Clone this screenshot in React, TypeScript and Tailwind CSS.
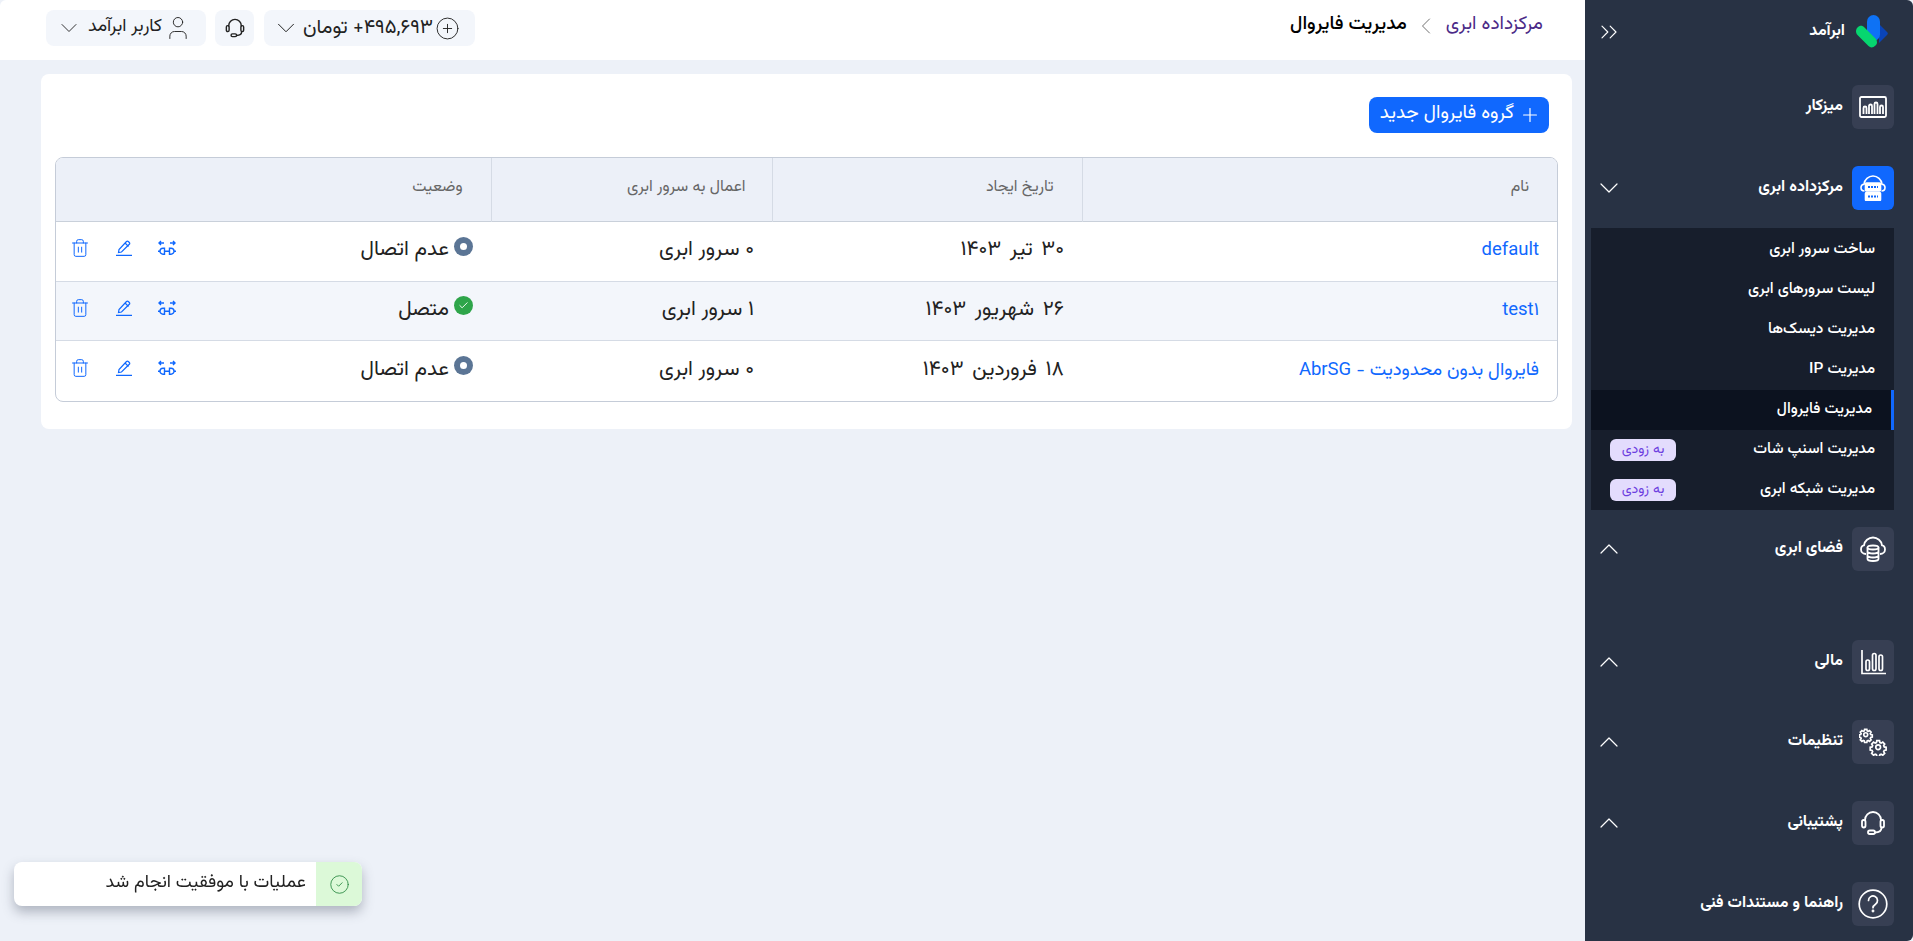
import { ChevronDown, ChevronUp, ChevronLeft, ChevronsRight, Plus, User, CirclePlus, CircleCheck, Check, Trash2 } from "lucide-react";
import type { ReactNode } from "react";

const font = "font-['Vazirmatn','Noto_Sans_Arabic','Noto_Sans','DejaVu_Sans',sans-serif]";

const Headset = ({ className }: { className?: string }) => (
  <svg viewBox="0 0 28 28" fill="none" stroke="currentColor" strokeWidth="1.8" className={className}>
    <path d="M6 12V11a8 8 0 0 1 16 0v1" />
    <rect x="3" y="11" width="3.5" height="7.500" rx="1.7" />
    <rect x="21.5" y="11" width="3.5" height="7.500" rx="1.7" />
    <path d="M22.500 18.500c0 3-2.500 5-6.500 5" />
    <rect x="9" y="21.5" width="7" height="3.500" rx="1.700" />
  </svg>
);

const Dashboard = () => (
  <svg viewBox="0 0 28 22" fill="none" stroke="currentColor" strokeWidth="1.8" className="w-7 h-[22px]">
    <rect x="1" y="1" width="26" height="20" rx="1.5" />
    <path d="M4.500 18v-6a1.500 1.500 0 0 1 3 0v6M10 18v-8a1.500 1.500 0 0 1 3 0v8M15.500 18V8a1.500 1.500 0 0 1 3 0v10M21 18v-7a1.500 1.500 0 0 1 3 0v7" />
  </svg>
);

const CloudServer = () => (
  <svg viewBox="0 0 26 26" fill="none" stroke="white" strokeWidth="1.6" className="w-[26px] h-[26px]">
    <path d="M4.500 16C2.300 16 1 14.500 1 12.500 1 10.700 2.300 9.300 4 9.200 4.500 4.500 8.500 1 13 1s8.500 3.500 9 8.200c1.700.1 3 1.500 3 3.300 0 2-1.300 3.500-3.500 3.500" />
    <rect x="5.500" y="8" width="15" height="8" rx="1" fill="white" />
    <rect x="5.500" y="17.500" width="15" height="8" rx="1" fill="white" />
    <path d="M8 12h10M8 21.500h10" stroke="#1068fe" strokeDasharray="2 1" strokeWidth="2" />
  </svg>
);

const CloudDb = () => (
  <svg viewBox="0 0 26 26" fill="none" stroke="currentColor" strokeWidth="1.8" className="w-[26px] h-[26px]">
    <path d="M6 18c-3 0-5-2-5-4.500C1 11 2.500 9.500 4 9.300 4.500 5 8.500 1.500 13 1.500S21.500 5 22 9.300c1.500.2 3 1.700 3 4.200S23 18 20 18" />
    <ellipse cx="13" cy="11.500" rx="5.500" ry="2" />
    <path d="M7.500 11.500V23c0 1 2.500 2 5.500 2s5.500-1 5.500-2V11.500M7.500 15.500c0 1 2.500 2 5.500 2s5.500-1 5.500-2M7.500 19.500c0 1 2.500 2 5.500 2s5.500-1 5.500-2" />
  </svg>
);

const Finance = () => (
  <svg viewBox="0 0 25 25" fill="none" stroke="currentColor" strokeWidth="1.7" className="w-[25px] h-[25px]">
    <path d="M1 0v23.500h24" />
    <rect x="5" y="10" width="3.500" height="10.500" rx="1.700" />
    <rect x="11.500" y="3.500" width="3.500" height="17" rx="1.700" />
    <rect x="18" y="5" width="3.500" height="15.500" rx="1.700" />
  </svg>
);

const GearPath = "M12 8.500a3.500 3.500 0 1 0 0 7 3.500 3.500 0 0 0 0-7Zm-2-6h4l.6 2.800 1.800.8 2.400-1.500 2.800 2.800-1.500 2.400.8 1.800 2.800.6v4l-2.800.6-.8 1.800 1.500 2.400-2.800 2.800-2.400-1.500-1.800.8-.6 2.800h-4l-.6-2.800-1.800-.8-2.400 1.500-2.800-2.800 1.500-2.400-.8-1.800-2.800-.6v-4l2.800-.6.8-1.800-1.500-2.400 2.800-2.800 2.400 1.500 1.800-.8Z";

const Gears = () => (
  <svg viewBox="0 0 28 28" fill="none" stroke="currentColor" className="w-7 h-7">
    <g transform="translate(0 0) scale(.56)" strokeWidth="3"><path d={GearPath} /></g>
    <g transform="translate(11 11) scale(.68)" strokeWidth="2.500"><path d={GearPath} /></g>
  </svg>
);

const Help = () => (
  <svg viewBox="0 0 30 30" fill="none" stroke="currentColor" strokeWidth="1.700" className="w-[30px] h-[30px]">
    <circle cx="15" cy="15" r="13.800" />
    <path d="M10.500 11.500a4.500 4.500 0 1 1 7 3.700c-1.500 1-2.500 1.800-2.500 3.500" strokeLinecap="round" />
    <circle cx="15" cy="22" r=".6" />
  </svg>
);

const Transfer = () => (
  <svg viewBox="0 0 18 16" fill="none" stroke="#1068fe" strokeWidth="1.400" className="w-[18px] h-4">
    <path d="M1 3h5M3 1 1 3l2 2M17 3h-5M15 1l2 2-2 2" />
    <path d="M5 8.200a3 3 0 1 0 0 6h1.500v-6ZM13 8.200h-1.500v6H13a3 3 0 1 0 0-6ZM6.500 11.200h5" />
    <path d="M0 11.200h2M16 11.200h2" />
  </svg>
);

const PenLine = () => (
  <svg viewBox="0 0 16 16" fill="none" stroke="#1068fe" strokeWidth="1.200" className="w-4 h-4">
    <path d="M2.500 12.500 3 9.500 10.500 1.500a1.300 1.300 0 0 1 1.800 0l1 1a1.300 1.300 0 0 1 0 1.800L5.500 12Z" />
    <path d="M9 3l3.500 3.500M0 15.300h16" />
  </svg>
);

const Logo = () => (
  <svg viewBox="0 0 32 33" className="w-8 h-[33px]">
    <path d="M23 9l8 8a2 2 0 0 1 0 3l-8 8Z" fill="#0a44b8" />
    <rect x="11" y="0" width="13" height="26" rx="6.500" fill="#0e72f5" />
    <path d="M1.500 12.500c2-2.500 5-2.500 7 0l11 11c2 2.500 2 5 0 7-2.500 2.500-5 2.500-7 .5l-11-11c-2-2-2-5.500 0-7.500Z" fill="#06d66f" />
  </svg>
);

type NavItemProps = { icon: ReactNode; label: string; active?: boolean; chevron?: "up" | "down"; className?: string };

const NavItem = ({ icon, label, active, chevron, className }: NavItemProps) => (
  <div className={`flex items-center h-11 mr-[19px] ml-[21px] ${className ?? ""}`}>
    <div className={`w-[42px] h-11 rounded-md flex items-center justify-center text-white ${active ? "bg-[#1068fe]" : "bg-[#373f53]"}`}>
      {icon}
    </div>
    <span className="mr-[9px] text-[16px] font-bold text-white -mt-[1px]">{label}</span>
    {chevron === "up" && <ChevronUp size={32} strokeWidth={0.9} className="mr-auto -ml-[13px] text-white" />}
    {chevron === "down" && <ChevronDown size={32} strokeWidth={0.9} className="mr-auto -ml-[13px] text-white" />}
  </div>
);

const SubItem = ({ label, soon, active }: { label: string; soon?: boolean; active?: boolean }) => (
  <div
    className={`h-10 flex items-center text-[15.5px] font-medium text-white ${
      active ? "bg-[#0c121f] border-r-[3px] border-[#1068fe] pr-[19px]" : "pr-[19px]"
    }`}
  >
    <span>{label}</span>
    {soon && (
      <span className="mr-auto ml-[19px] w-[66px] h-[22px] rounded-md bg-[#e3dcfd] text-[#6d3fe0] text-[14px] flex items-center justify-center font-normal">
        به زودی
      </span>
    )}
  </div>
);

const Sidebar = () => (
  <aside className="w-[328px] shrink-0 bg-[#283244] rounded-tr-md rounded-br-md flex flex-col pt-[15px]">
    <div className="flex items-center h-[33px] mr-[25px] ml-[21px] text-white">
      <Logo />
      <span className="mr-[11px] text-[16px] font-bold mt-[1px]">ابرآمد</span>
      <ChevronsRight size={28} strokeWidth={1} className="mr-auto -ml-[11px]" />
    </div>
    <NavItem className="mt-[37px]" icon={<Dashboard />} label="میزکار" />
    <NavItem className="mt-[37px]" icon={<CloudServer />} label="مرکزداده ابری" active chevron="down" />
    <div className="mt-[18px] pt-[2px] mr-[19px] ml-[6px] bg-[#171e2c] flex flex-col">
      <SubItem label="ساخت سرور ابری" />
      <SubItem label="لیست سرورهای ابری" />
      <SubItem label="مدیریت دیسک‌ها" />
      <SubItem label="مدیریت IP" />
      <SubItem label="مدیریت فایروال" active />
      <SubItem label="مدیریت اسنپ شات" soon />
      <SubItem label="مدیریت شبکه ابری" soon />
    </div>
    <NavItem className="mt-[17px]" icon={<CloudDb />} label="فضای ابری" chevron="up" />
    <NavItem className="mt-[69px]" icon={<Finance />} label="مالی" chevron="up" />
    <NavItem className="mt-[36px]" icon={<Gears />} label="تنظیمات" chevron="up" />
    <NavItem className="mt-[37px]" icon={<Headset className="w-7 h-7" />} label="پشتیبانی" chevron="up" />
    <NavItem className="mt-[37px]" icon={<Help />} label="راهنما و مستندات فنی" />
  </aside>
);

const Topbar = () => (
  <header className="h-[60px] bg-white flex items-center justify-between pr-[42px] pl-[46px] pb-[4px] rounded-tl-md">
    <div className="flex items-center text-[19px] mb-[5px]">
      <span className="text-[#4b2a87]">مرکزداده ابری</span>
      <ChevronLeft size={28} strokeWidth={0.8} className="mr-[6px] ml-[5px] text-[#666]" />
      <span className="text-black font-medium">مدیریت فایروال</span>
    </div>
    <div className="flex items-center text-[#222]">
      <div className="h-9 w-[211px] bg-[#f3f6fb] rounded-lg flex items-center pr-[15px] pl-[7px] text-[20px]">
        <CirclePlus size={25} strokeWidth={0.9} className="shrink-0" />
        <span className="mr-[2px] -mt-[1px] whitespace-nowrap">۴۹۵,۶۹۳+ تومان</span>
        <ChevronDown size={30} strokeWidth={0.8} className="mr-auto shrink-0" />
      </div>
      <div className="h-9 w-[39px] mr-[10px] bg-[#f3f6fb] rounded-lg flex items-center justify-center">
        <Headset className="w-[22px] h-[22px]" />
      </div>
      <div className="h-9 w-[160px] mr-[9px] bg-[#f3f6fb] rounded-lg flex items-center pr-[14px] pl-[9px] text-[18px]">
        <User size={28} strokeWidth={0.8} className="shrink-0" />
        <span className="mr-[2px] -mt-[1px] whitespace-nowrap">کاربر ابرآمد</span>
        <ChevronDown size={28} strokeWidth={0.8} className="mr-auto shrink-0" />
      </div>
    </div>
  </header>
);

const StatusIcon = ({ on }: { on: boolean }) =>
  on ? (
    <span className="w-[19px] h-[19px] -mt-[8px] rounded-full bg-[#2ea54a] flex items-center justify-center text-white">
      <Check size={11} strokeWidth={2} />
    </span>
  ) : (
    <span className="w-[19px] h-[19px] -mt-[8px] rounded-full bg-[#5b7595] flex items-center justify-center">
      <span className="w-[7px] h-[7px] rounded-full bg-white" />
    </span>
  );

const rows = [
  { name: "default", date: "۳۰ تیر ۱۴۰۳", servers: "۰ سرور ابری", on: false, h: "h-[60px]" },
  { name: "test۱", date: "۲۶ شهریور ۱۴۰۳", servers: "۱ سرور ابری", on: true, h: "h-[59px] bg-[#f3f6fb]" },
  { name: "فایروال بدون محدودیت - AbrSG", date: "۱۸ فروردین ۱۴۰۳", servers: "۰ سرور ابری", on: false, h: "h-[61px]" },
];

const Table = () => (
  <div className="mt-6 border border-[#c5ccd8] rounded-lg overflow-hidden">
    <table className="w-full table-fixed border-collapse">
      <thead>
        <tr className="h-[63px] bg-[#ecf0f8] text-[#666] text-[16px] border-b border-[#c9d0da]">
          <th className="w-[475px] text-right pr-[28px] pb-[2px] font-normal border-l border-[#d5dbe5]">نام</th>
          <th className="w-[310px] text-right pr-[28px] pb-[2px] font-normal border-l border-[#d5dbe5]">تاریخ ایجاد</th>
          <th className="w-[281px] text-right pr-[26px] pb-[2px] font-normal border-l border-[#d5dbe5]">اعمال به سرور ابری</th>
          <th className="text-right pr-[28px] pb-[2px] font-normal">وضعیت</th>
        </tr>
      </thead>
      <tbody>
        {rows.map((r, i) => (
          <tr key={r.name} className={`${r.h} ${i < 2 ? "border-b border-[#d5dbe5]" : ""}`}>
            <td className="pr-[18px] text-[18.5px] text-[#1068fe]">{r.name}</td>
            <td className="pr-[18px] text-[21px] [word-spacing:3px] text-[#222] pb-[2px]">{r.date}</td>
            <td className="pr-[18px] text-[21px] text-[#222] pb-[2px]">{r.servers}</td>
            <td className="pr-[18px] pl-[14px] pb-[2px]">
              <div className="flex items-center text-[21px] text-[#222]">
                <StatusIcon on={r.on} />
                <span className="mr-[5px]">{r.on ? "متصل" : "عدم اتصال"}</span>
                <div className="mr-auto flex items-center gap-[26px] -mt-[4px]">
                  <Transfer />
                  <PenLine />
                  <Trash2 size={20} strokeWidth={1.2} className="text-[#1068fe]" />
                </div>
              </div>
            </td>
          </tr>
        ))}
      </tbody>
    </table>
  </div>
);

const Toast = () => (
  <div className="fixed left-[14px] top-[862px] w-[348px] h-11 bg-white rounded-lg overflow-hidden flex shadow-[0_6px_12px_rgba(60,70,90,0.35)]">
    <div className="w-[46px] bg-[#dcf9d8] flex items-center justify-center text-[#2c8a44]">
      <CircleCheck size={21} strokeWidth={1} />
    </div>
    <div className="flex-1 flex items-center pr-[10px] pb-[2px] text-[18px] text-[#222]">عملیات با موفقیت انجام شد</div>
  </div>
);

export default function App() {
  return (
    <div dir="rtl" className={`flex h-[941px] overflow-hidden bg-[#edf1f8] ${font}`}>
      <Sidebar />
      <main className="flex-1 flex flex-col min-w-0">
        <Topbar />
        <section className="mt-[14px] mr-[13px] ml-[41px] bg-white rounded-lg pt-[23px] pr-[14px] pl-[14px] pb-[27px]">
          <button className="flex items-center gap-[5px] h-9 w-[180px] mr-[9px] pr-[8px] bg-[#1068fe] text-white rounded-lg text-[19px]">
            <Plus size={22} strokeWidth={1.3} />
            <span className="-mt-[2px]">گروه فایروال جدید</span>
          </button>
          <Table />
        </section>
      </main>
      <Toast />
    </div>
  );
}
